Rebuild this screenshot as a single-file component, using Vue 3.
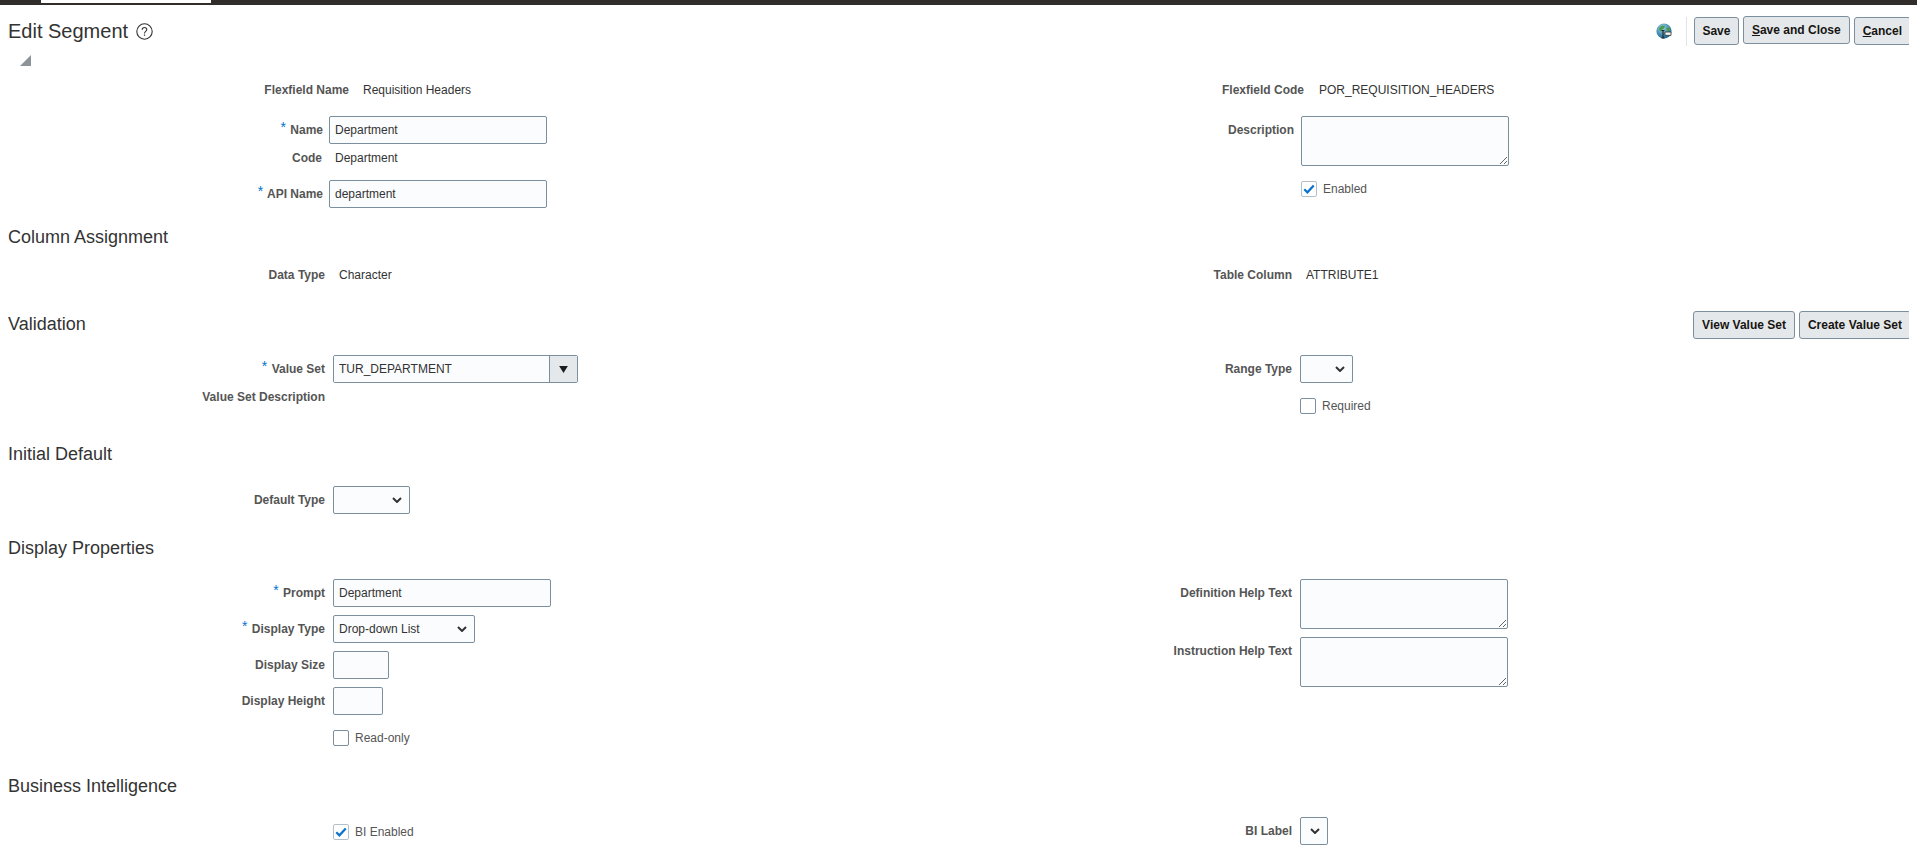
<script setup>
// Static form: no state is needed to reproduce the page.
</script>

<template>
  <div class="page">
    <div class="topbar"><div class="tab"></div></div>

    <header class="pagehead">
      <div class="title">
        <h1>Edit Segment</h1>
        <svg class="help" viewBox="0 0 17 17" width="17" height="17">
          <circle cx="8.5" cy="8.5" r="7.7" fill="none" stroke="#333" stroke-width="1.1" />
          <path d="M6.2 6.7c0-1.3 1-2.2 2.3-2.2s2.3.9 2.3 2.1c0 1.8-2.3 1.8-2.3 3.8" fill="none" stroke="#333" stroke-width="1.1" />
          <rect x="7.9" y="11.5" width="1.2" height="1.3" fill="#333" />
        </svg>
      </div>
      <div class="actions">
        <svg class="globe" viewBox="0 0 16 16" width="16" height="16">
          <defs>
            <radialGradient id="gl" cx="0.4" cy="0.3" r="0.75">
              <stop offset="0" stop-color="#9ad6ea" />
              <stop offset="1" stop-color="#0f5f8c" />
            </radialGradient>
          </defs>
          <circle cx="8" cy="8" r="7.6" fill="url(#gl)" />
          <path d="M3 5l3-2.5 3 .5-1 2.5-2 1-.5 2-2-1zM10 5l3-.5 1.5 3-3 1z" fill="#4c9a4a" />
          <path d="M9 9h6v3.4H9z" fill="#f4f4f4" stroke="#333" stroke-width="0.8" />
          <path d="M5.5 7.5h3M5.5 15h3M7 7.5V15" fill="none" stroke="#222" stroke-width="1.1" />
        </svg>
        <span class="sep"></span>
        <button class="btn save">Save</button>
        <button class="btn raised"><u>S</u>ave and Close</button>
        <button class="btn last"><u>C</u>ancel</button>
      </div>
    </header>

    <svg class="corner" viewBox="0 0 11 11" width="11" height="11"><path d="M11 0v11H0z" fill="#8d9499" /></svg>

    <section class="form first">
      <div class="col">
        <div class="row text wide">
          <label>Flexfield Name</label><span class="val">Requisition Headers</span>
        </div>
        <div class="row name-row">
          <label><i>*</i> Name</label><input class="ctl w218" value="Department" />
        </div>
        <div class="row text name-text">
          <label>Code</label><span class="val pad">Department</span>
        </div>
        <div class="row name-row api">
          <label><i>*</i> API Name</label><input class="ctl w218" value="department" />
        </div>
      </div>
      <div class="col right">
        <div class="row text wide">
          <label>Flexfield Code</label><span class="val">POR_REQUISITION_HEADERS</span>
        </div>
        <div class="row name-row">
          <label>Description</label><textarea class="ctl area"></textarea>
        </div>
        <div class="row name-row enabled">
          <span></span>
          <div class="check"><span class="box on"><svg viewBox="0 0 16 16" width="16" height="16"><path d="M2.6 8.2l3.6 3.6L13.4 4" fill="none" stroke="#0a72cc" stroke-width="2.5" /></svg></span>Enabled</div>
        </div>
      </div>
    </section>

    <h2 class="h col-assign">Column Assignment</h2>
    <section class="form sec-data">
      <div class="col">
        <div class="row text"><label>Data Type</label><span class="val pad">Character</span></div>
      </div>
      <div class="col right">
        <div class="row text"><label>Table Column</label><span class="val pad">ATTRIBUTE1</span></div>
      </div>
    </section>

    <div class="sechead">
      <h2 class="h">Validation</h2>
      <div class="secbtns">
        <button class="btn">View Value Set</button>
        <button class="btn last">Create Value Set</button>
      </div>
    </div>
    <section class="form sec-val">
      <div class="col">
        <div class="row">
          <label><i>*</i> Value Set</label>
          <div class="combo">
            <input class="combo-in" value="TUR_DEPARTMENT" />
            <span class="combo-btn"><svg viewBox="0 0 10 8" width="9" height="7"><path d="M0 0h10L5 8z" fill="#1c1c1c" /></svg></span>
          </div>
        </div>
        <div class="row text after"><label>Value Set Description</label><span></span></div>
      </div>
      <div class="col right">
        <div class="row">
          <label>Range Type</label><select class="ctl sel w52"><option></option></select>
        </div>
        <div class="row required">
          <span></span>
          <div class="check"><span class="box"></span>Required</div>
        </div>
      </div>
    </section>

    <h2 class="h init">Initial Default</h2>
    <section class="form sec-init">
      <div class="col">
        <div class="row"><label>Default Type</label><select class="ctl sel w77"><option></option></select></div>
      </div>
    </section>

    <h2 class="h disp">Display Properties</h2>
    <section class="form sec-disp">
      <div class="col stack">
        <div class="row"><label><i>*</i> Prompt</label><input class="ctl w218" value="Department" /></div>
        <div class="row"><label><i>*</i> Display Type</label><select class="ctl sel w142"><option>Drop-down List</option></select></div>
        <div class="row"><label>Display Size</label><input class="ctl w56" /></div>
        <div class="row"><label>Display Height</label><input class="ctl w50" /></div>
        <div class="row readonly">
          <span></span>
          <div class="check"><span class="box"></span>Read-only</div>
        </div>
      </div>
      <div class="col right stack">
        <div class="row"><label>Definition Help Text</label><textarea class="ctl area"></textarea></div>
        <div class="row"><label>Instruction Help Text</label><textarea class="ctl area"></textarea></div>
      </div>
    </section>

    <h2 class="h bi">Business Intelligence</h2>
    <section class="form sec-bi">
      <div class="col">
        <div class="row bi-check">
          <span></span>
          <div class="check"><span class="box on"><svg viewBox="0 0 16 16" width="16" height="16"><path d="M2.6 8.2l3.6 3.6L13.4 4" fill="none" stroke="#0a72cc" stroke-width="2.5" /></svg></span>BI Enabled</div>
        </div>
      </div>
      <div class="col right">
        <div class="row"><label>BI Label</label><select class="ctl sel w28"><option></option></select></div>
      </div>
    </section>
  </div>
</template>

<style>
html, body { margin: 0; background: #fff; }
</style>

<style scoped>
.page {
  width: 1917px;
  height: 851px;
  overflow: hidden;
  background: #fff;
  color: #333;
  font: 12px/16px "Liberation Sans", Arial, sans-serif;
}
.topbar { height: 5px; background: #312d2a; }
.tab { width: 170px; height: 3px; margin-left: 41px; background: #fff; }

.pagehead {
  display: flex;
  justify-content: space-between;
  height: 30px;
  padding: 11px 8px 0;
  align-items: flex-start;
}
.title { display: flex; align-items: center; height: 30px; }
h1 { margin: 0; font-size: 20px; line-height: 30px; font-weight: 400; color: #333; }
.help { margin-left: 8px; }
.actions { display: flex; align-items: center; gap: 4px; height: 30px; overflow: hidden; }
.globe { margin-right: 10px; }
.sep { width: 1px; height: 29px; background: #dfe4e7; margin-right: 3px; }
.btn {
  height: 28px;
  padding: 0 8px;
  box-sizing: border-box;
  border: 1px solid #7b8f9e;
  border-radius: 3px;
  background: #e5e8ea;
  color: #161513;
  font: 700 12px/16px "Liberation Sans", Arial, sans-serif;
}
.save { padding: 0 7.5px; }
.raised { margin-bottom: 2px; }
.last { margin-right: -2px; }

.corner { display: block; margin: 9px 0 0 20px; }

.form { display: flex; margin: 0; }
.col { width: 1000px; display: flex; flex-direction: column; }
.col.right { width: 909px; }
.row {
  display: grid;
  grid-template-columns: 325px 1fr;
  column-gap: 8px;
  align-items: start;
}
.right .row { grid-template-columns: 292px 1fr; }
.row.text { height: 20px; align-items: center; }
label {
  text-align: right;
  font-weight: 700;
  color: #555;
  line-height: 20px;
  padding-top: 4px;
  white-space: nowrap;
}
.row.text label { padding-top: 0; }
label i {
  font-style: normal;
  font-size: 14px;
  line-height: 0;
  margin-right: 1px;
  color: #0572ce;
  vertical-align: 2px;
  font-weight: 400;
}
.val { color: #333; white-space: nowrap; }
.val.pad { padding-left: 6px; }

.row.wide { grid-template-columns: 349px 1fr; column-gap: 14px; }
.right .row.wide { grid-template-columns: 304px 1fr; column-gap: 15px; }

.row.name-row { grid-template-columns: 323px 1fr; column-gap: 6px; }
.row.name-text { grid-template-columns: 322px 1fr; column-gap: 7px; }
.right .row.name-row { grid-template-columns: 294px 1fr; column-gap: 7px; }
.name-row { margin-top: 16px; }
.name-row.enabled { margin-top: 15px; }
.name-text { margin-top: 4px; }
.name-row.api { margin-top: 12px; }
.first { margin-top: 14px; }

.ctl {
  display: block;
  box-sizing: border-box;
  height: 28px;
  margin: 0;
  padding: 0 5px;
  border: 1px solid #7b8f9e;
  border-radius: 2px;
  background: #fbfcfe;
  color: #333;
  font: 12px/16px "Liberation Sans", Arial, sans-serif;
  outline: none;
}
.sel {
  appearance: none;
  -webkit-appearance: none;
  background-image: url("data:image/svg+xml,%3Csvg xmlns='http://www.w3.org/2000/svg' width='10' height='6' viewBox='0 0 10 6'%3E%3Cpath d='M1 1l4 4 4-4' fill='none' stroke='%23333' stroke-width='2'/%3E%3C/svg%3E");
  background-repeat: no-repeat;
  background-position: right 7px center;
}
.area { width: 208px; height: 50px; resize: both; }
.w218 { width: 218px; }
.w56 { width: 56px; }
.w50 { width: 50px; }
.w52 { width: 53px; }
.w77 { width: 77px; }
.w142 { width: 142px; }
.w28 { width: 28px; }

.combo {
  display: flex;
  width: 245px;
  height: 28px;
  box-sizing: border-box;
  border: 1px solid #7b8f9e;
  border-radius: 2px;
  overflow: hidden;
}
.combo-in {
  flex: 1;
  min-width: 0;
  border: 0;
  padding: 0 5px;
  background: #fbfcfe;
  color: #333;
  font: 12px/16px "Liberation Sans", Arial, sans-serif;
  outline: none;
}
.combo-btn {
  width: 27px;
  display: flex;
  align-items: center;
  justify-content: center;
  border-left: 1px solid #7b8f9e;
  background: #e5e8ea;
}

.check { display: flex; align-items: center; gap: 6px; color: #555; height: 16px; }
.box {
  width: 16px;
  height: 16px;
  box-sizing: border-box;
  border: 1px solid #7b8f9e;
  border-radius: 2px;
  background: #fff;
  display: flex;
  align-items: center;
  justify-content: center;
}
.box.on { border-color: #b3c0c9; }
.after { margin-top: 4px; }
.required { margin-top: 15px; }
.readonly { margin-top: 7px; }
.bi-check { margin-top: 7px; }

.h { margin: 0; font-size: 18px; line-height: 24px; font-weight: 400; color: #333; padding-left: 8px; }
.col-assign { margin-top: 17px; }
.sec-data { margin-top: 16px; }
.sechead {
  display: flex;
  justify-content: space-between;
  align-items: center;
  height: 28px;
  margin-top: 26px;
  padding-right: 8px;
}
.sechead .h { margin-bottom: 2px; }
.secbtns { display: flex; gap: 4px; overflow: hidden; }
.sec-val { margin-top: 16px; }
.init { margin-top: 28px; }
.sec-init { margin-top: 20px; }
.disp { margin-top: 22px; }
.sec-disp { margin-top: 19px; }
.stack { row-gap: 8px; }
.bi { margin-top: 28px; }
.sec-bi { margin-top: 19px; }
</style>
